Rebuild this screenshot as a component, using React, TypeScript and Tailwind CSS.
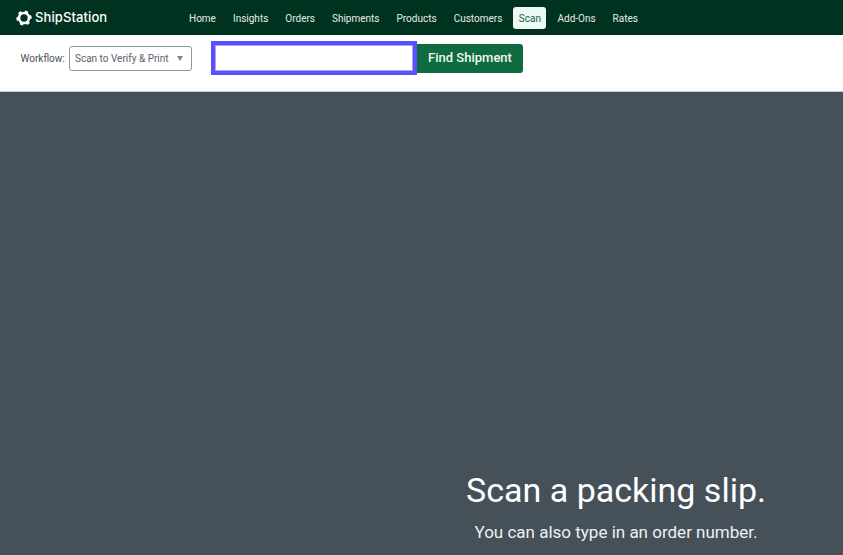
const nav = ["Home", "Insights", "Orders", "Shipments", "Products", "Customers", "Scan", "Add-Ons", "Rates"];

function Logo() {
  return (
    <svg width="16" height="16" viewBox="0 0 16 16" className="shrink-0">
      <circle cx="8" cy="8" r="5" fill="none" stroke="#fff" strokeWidth="2.6" />
      {[22, 82, 142, 202, 262, 322].map((a) => (
        <rect key={a} x="6.3" y="0.4" width="3.4" height="2.2" rx="0.5" fill="#fff" transform={`rotate(${a} 8 8)`} />
      ))}
    </svg>
  );
}

export default function App() {
  return (
    <div className="flex h-[555px] w-[843px] flex-col overflow-hidden font-['Roboto',sans-serif]">
      <header className="flex h-[35px] shrink-0 items-center bg-[#00331f] pl-4 pt-px">
        <div className="flex w-[167px] items-center gap-[3px]">
          <Logo />
          <span className="font-['Inter',sans-serif] text-[13px] font-medium tracking-[0.1px] text-white">ShipStation</span>
        </div>
        <nav className="flex items-center gap-[5px]">
          {nav.map((n) => (
            <span
              key={n}
              className={
                n === "Scan"
                  ? "flex h-[22px] items-center rounded-[3px] bg-[#edfaf3] px-[5.5px] text-[10px] text-[#11643f]"
                  : "flex h-[22px] items-center px-[6px] text-[10px] text-[#e6ece9]"
              }
            >
              {n}
            </span>
          ))}
        </nav>
      </header>
      <div className="flex h-[57px] shrink-0 items-center border-b border-[#c9ccd0] bg-white pb-[10px] pl-[20.5px]">
        <span className="w-[44px] shrink-0 text-[10px] whitespace-nowrap text-[#474f58]">Workflow:</span>
        <div className="ml-[4.5px] flex h-[25px] w-[123px] items-center justify-between rounded-[3px] border border-[#8f969e] pl-[5px] pr-[8px] text-[10px] text-[#5a626b]">
          <span>Scan to Verify &amp; Print</span>
          <span className="h-0 w-0 border-x-[3px] border-t-[5px] border-x-transparent border-t-[#7d858e]" />
        </div>
        <div className="ml-[19px] h-[34px] w-[206px] shrink-0 border-[4px] border-[#5b50fb] bg-white outline-1 outline-offset-[-5px] outline-[#a9a4fb]" />
        <button className="flex h-[29px] w-[106px] items-center justify-center rounded-r-[3px] bg-[#0f6b40] text-[13px] font-medium text-[#f2f7f4]">
          Find Shipment
        </button>
      </div>
      <main className="flex flex-1 flex-col items-end justify-end bg-[#455059] pb-[11px] pr-[77px]">
        <div className="flex flex-col items-center">
          <h1 className="text-[34px] leading-[44px] font-normal text-white">Scan a packing slip.</h1>
          <p className="mt-[8px] text-[17px] leading-[24px] text-[#eef0f1]">You can also type in an order number.</p>
        </div>
      </main>
    </div>
  );
}
